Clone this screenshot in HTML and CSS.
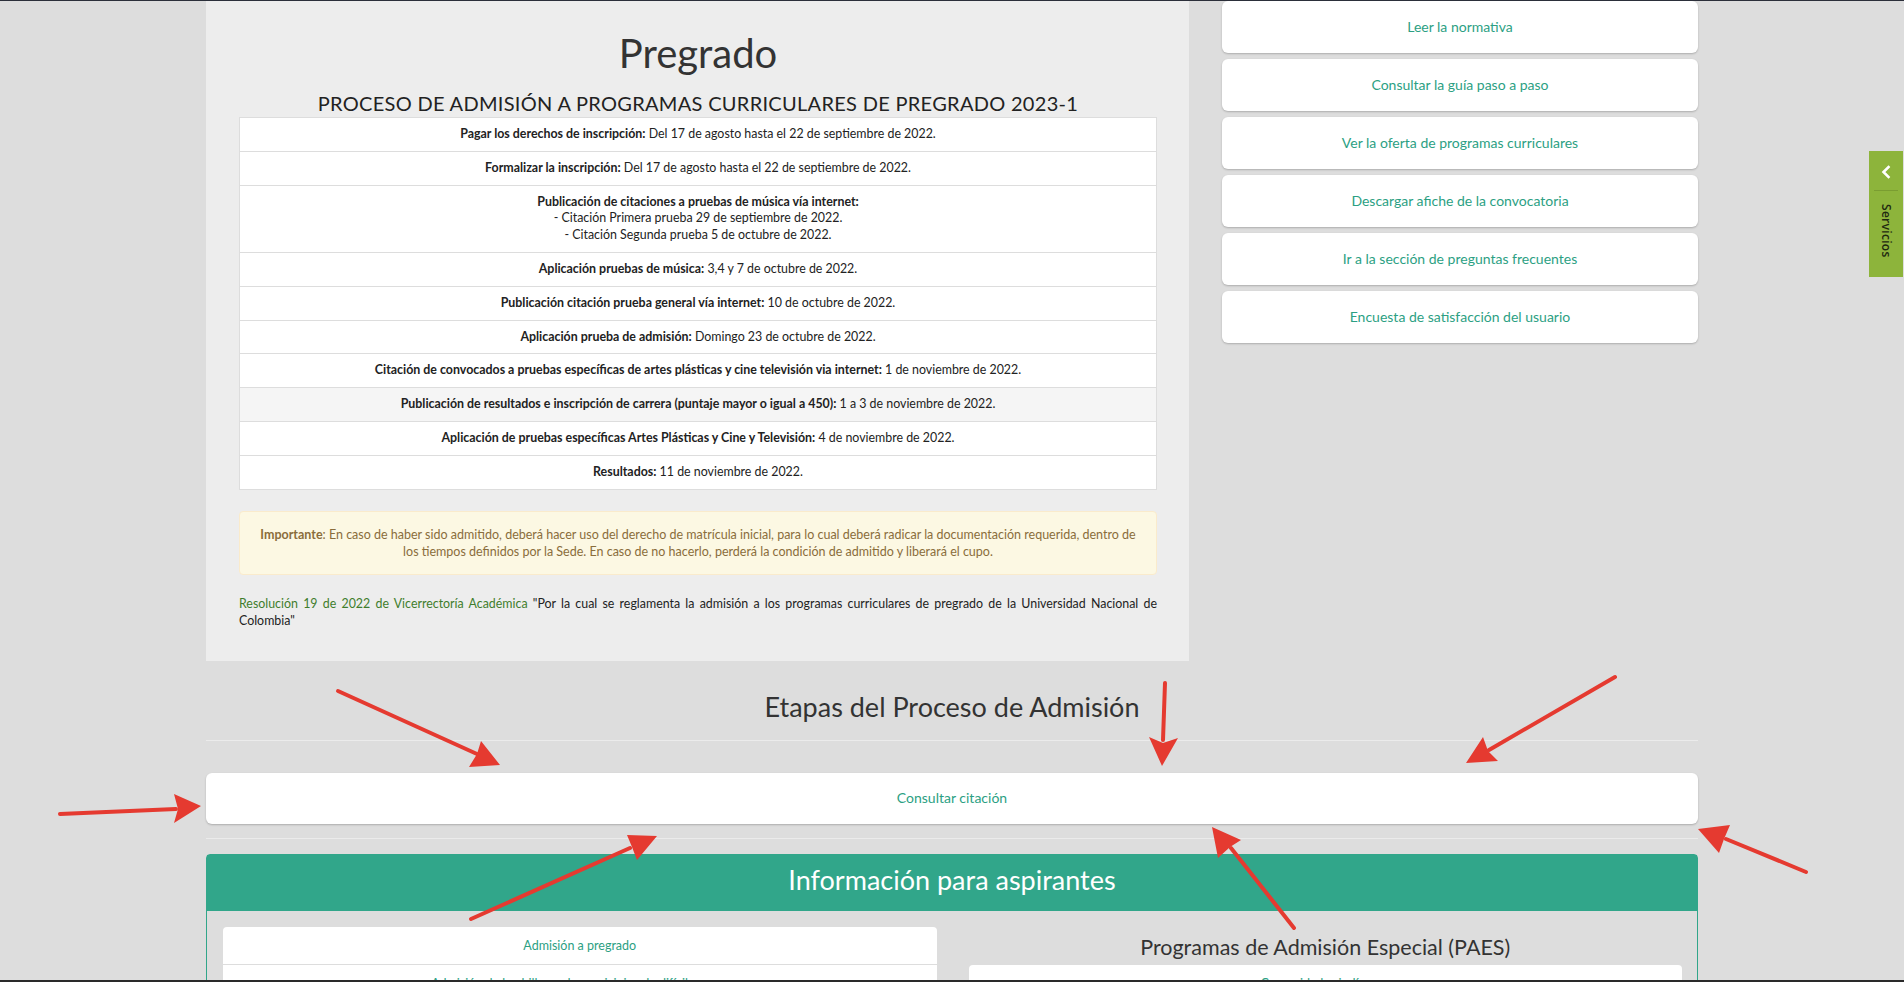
FILE: index.html
```html
<!DOCTYPE html>
<html lang="es">
<head>
<meta charset="utf-8">
<title>Pregrado - Admisiones</title>
<link rel="stylesheet" href="styles.css">
</head>
<body>
<main class="container">
  <div class="top-row">
    <section class="intro-panel">
      <h1 class="intro-title">Pregrado</h1>
      <h2 class="intro-subtitle">PROCESO DE ADMISIÓN A PROGRAMAS CURRICULARES DE PREGRADO 2023-1</h2>
      <table class="dates">
        <tbody>
          <tr><td><b>Pagar los derechos de inscripción:</b> Del 17 de agosto hasta el 22 de septiembre de 2022.</td></tr>
          <tr><td><b>Formalizar la inscripción:</b> Del 17 de agosto hasta el 22 de septiembre de 2022.</td></tr>
          <tr><td><b>Publicación de citaciones a pruebas de música vía internet:</b><br>- Citación Primera prueba 29 de septiembre de 2022.<br>- Citación Segunda prueba 5 de octubre de 2022.</td></tr>
          <tr><td><b>Aplicación pruebas de música:</b> 3,4 y 7 de octubre de 2022.</td></tr>
          <tr><td><b>Publicación citación prueba general vía internet:</b> 10 de octubre de 2022.</td></tr>
          <tr><td><b>Aplicación prueba de admisión:</b> Domingo 23 de octubre de 2022.</td></tr>
          <tr><td><b>Citación de convocados a pruebas específicas de artes plásticas y cine televisión via internet:</b> 1 de noviembre de 2022.</td></tr>
          <tr class="is-hover"><td><b>Publicación de resultados e inscripción de carrera (puntaje mayor o igual a 450):</b> 1 a 3 de noviembre de 2022.</td></tr>
          <tr><td><b>Aplicación de pruebas específicas Artes Plásticas y Cine y Televisión:</b> 4 de noviembre de 2022.</td></tr>
          <tr><td><b>Resultados:</b> 11 de noviembre de 2022.</td></tr>
        </tbody>
      </table>
      <div class="notice"><b>Importante</b>: En caso de haber sido admitido, deberá hacer uso del derecho de matrícula inicial, para lo cual deberá radicar la documentación requerida, dentro de los tiempos definidos por la Sede. En caso de no hacerlo, perderá la condición de admitido y liberará el cupo.</div>
      <p class="resolution"><a href="#">Resolución 19 de 2022 de Vicerrectoría Académica</a> "Por la cual se reglamenta la admisión a los programas curriculares de pregrado de la Universidad Nacional de Colombia"</p>
    </section>
    <nav class="links">
      <a class="card-link" href="#">Leer la normativa</a>
      <a class="card-link" href="#">Consultar la guía paso a paso</a>
      <a class="card-link" href="#">Ver la oferta de programas curriculares</a>
      <a class="card-link" href="#">Descargar afiche de la convocatoria</a>
      <a class="card-link" href="#">Ir a la sección de preguntas frecuentes</a>
      <a class="card-link" href="#">Encuesta de satisfacción del usuario</a>
    </nav>
  </div>

  <h2 class="section-title">Etapas del Proceso de Admisión</h2>
  <hr class="rule rule-top">
  <a class="card-link wide" href="#">Consultar citación</a>
  <hr class="rule rule-bottom">

  <section class="info-panel">
    <h2 class="info-head">Información para aspirantes</h2>
    <div class="info-body">
      <div class="info-col">
        <ul class="list-box">
          <li><a href="#">Admisión a pregrado</a></li>
          <li><a href="#">Admisión de bachilleres de municipios de difícil acceso</a></li>
        </ul>
      </div>
      <div class="info-col">
        <h3 class="info-sub">Programas de Admisión Especial (PAES)</h3>
        <ul class="list-box">
          <li><a href="#">Comunidades indígenas</a></li>
        </ul>
      </div>
    </div>
  </section>
</main>

<aside class="side-tab">
  <div class="side-tab-toggle">
    <svg width="12" height="14" viewBox="0 0 12 14" aria-hidden="true"><polyline points="8.5,2 3.5,7 8.5,12" fill="none" stroke="#fff" stroke-width="2.6" stroke-linecap="square"/></svg>
  </div>
  <div class="side-tab-label">Servicios</div>
</aside>

<div class="frame" aria-hidden="true"></div>

<svg class="annotations" width="1904" height="982" viewBox="0 0 1904 982" aria-hidden="true">
  <g stroke="#e53a30" stroke-width="4" stroke-linecap="round" fill="none">
    <line x1="338" y1="691" x2="477" y2="754"/>
    <line x1="1165" y1="683" x2="1163" y2="740"/>
    <line x1="1615" y1="677" x2="1489" y2="750"/>
    <line x1="60" y1="814" x2="176" y2="809"/>
    <line x1="471" y1="919" x2="630" y2="848"/>
    <line x1="1294" y1="928" x2="1231" y2="848"/>
    <line x1="1806" y1="872" x2="1726" y2="839"/>
  </g>
  <g fill="#e53a30">
    <polygon points="500,765 481,741 477,754 469,767"/>
    <polygon points="1162,766 1149,737 1163,743 1178,738"/>
    <polygon points="1466,763 1483,737 1488,751 1498,761"/>
    <polygon points="201,806 174,794 178,809 174,823"/>
    <polygon points="657,836 627,835 632,847 637,860"/>
    <polygon points="1212,827 1241,840 1230,847 1218,858"/>
    <polygon points="1698,829 1730,825 1724,839 1719,853"/>
  </g>
</svg>
</body>
</html>
```

FILE: styles.css
```css
* { box-sizing: border-box; }

html, body {
  margin: 0;
  padding: 0;
}

body {
  background: #dddddd;
  color: #333333;
  font-family: Lato, "Liberation Sans", Arial, sans-serif;
  font-size: 12.4px;
  height: 982px;
  overflow: hidden;
  position: relative;
}

a { text-decoration: none; }

.container {
  width: 1492px;
  margin: 0 auto;
}

.top-row {
  display: grid;
  grid-template-columns: 983px 476px;
  justify-content: space-between;
  align-items: start;
}

/* ---------- left intro panel ---------- */
.intro-panel {
  background: #ededed;
  padding: 32px 32px 32px 33px;
}

.intro-title {
  margin: 0 0 18px;
  font-size: 40px;
  line-height: 43px;
  font-weight: 400;
  text-align: center;
  color: #333;
}

.intro-subtitle {
  margin: 0 0 3px;
  font-size: 20px;
  line-height: 21px;
  letter-spacing: 0.3px;
  font-weight: 400;
  text-align: center;
  color: #222;
}

.dates {
  width: 100%;
  border-collapse: collapse;
  background: #ffffff;
  border: 1px solid #dddddd;
  margin-bottom: 21px;
}

.dates td {
  padding: 8px;
  line-height: 16.8px;
  border-top: 1px solid #dddddd;
  text-align: center;
  color: #222;
}

.dates b { font-weight: 700; }

.dates .is-hover td { background: #f5f5f5; }

.notice {
  background: #fcf8e3;
  border: 1px solid #faebcc;
  border-radius: 4px;
  color: #8a6d3b;
  padding: 14px 17px;
  font-size: 12.5px;
  line-height: 17px;
  text-align: center;
  margin-bottom: 20px;
}

.resolution {
  margin: 0;
  line-height: 17px;
  text-align: justify;
  color: #222;
}

.resolution a { color: #3f7d2c; }

/* ---------- right links ---------- */
.links {
  display: flex;
  flex-direction: column;
  gap: 6px;
  padding-top: 1px;
}

.card-link {
  display: block;
  background: #ffffff;
  border-radius: 6px;
  box-shadow: 0 1px 2px rgba(0, 0, 0, 0.22);
  padding: 17px 10px;
  line-height: 18px;
  font-size: 14px;
  color: #2c9f83;
  text-align: center;
}

/* ---------- stages ---------- */
.section-title {
  margin: 31px 0 19px;
  font-size: 27px;
  line-height: 29.7px;
  font-weight: 400;
  text-align: center;
  color: #333;
}

.rule {
  border: 0;
  border-top: 1px solid #ebebeb;
  height: 0;
}

.rule-top { margin: 0 0 32px; }
.rule-bottom { margin: 14px 0 15px; }

.card-link.wide { padding: 16px 10px 17px; }

/* ---------- info panel ---------- */
.info-panel {
  border: 1px solid #31a68a;
  border-radius: 4px 4px 0 0;
}

.info-head {
  margin: 0;
  background: #31a68a;
  color: #ffffff;
  font-size: 27px;
  line-height: 29.7px;
  font-weight: 400;
  text-align: center;
  padding: 10px 15px 16px;
}

.info-body {
  display: grid;
  grid-template-columns: 1fr 1fr;
  gap: 32px;
  padding: 16px 15px 16px 16px;
}

.info-sub {
  margin: 9px 0 5px;
  font-size: 21.5px;
  line-height: 23.6px;
  font-weight: 400;
  text-align: center;
  color: #333;
}

.list-box {
  list-style: none;
  margin: 0;
  padding: 0;
  background: #ffffff;
  border-radius: 4px;
}

.list-box li {
  padding: 10px;
  line-height: 17px;
  font-size: 12.5px;
  text-align: center;
}

.list-box li + li { border-top: 1px solid #dddddd; }

.list-box a { color: #2c9f83; }

/* ---------- side tab ---------- */
.side-tab {
  position: absolute;
  top: 151px;
  right: 1px;
  width: 34px;
  height: 126px;
  background: #8db43b;
  display: flex;
  flex-direction: column;
  align-items: center;
}

.side-tab-toggle {
  width: 24px;
  height: 40px;
  display: flex;
  align-items: center;
  justify-content: center;
  border-bottom: 1px solid #7a9d31;
  padding-top: 2px;
}

.side-tab-label {
  writing-mode: vertical-rl;
  font-family: "Open Sans", "Noto Sans", sans-serif;
  font-size: 12px;
  font-weight: 600;
  color: #1f2a10;
  margin-top: 13px;
  letter-spacing: 0.3px;
}

/* ---------- screenshot frame + annotations ---------- */
.frame {
  position: absolute;
  inset: 0;
  border-top: 1px solid #2b2f3a;
  border-bottom: 2px solid #2a2a2a;
  pointer-events: none;
}

.annotations {
  position: absolute;
  top: 0;
  left: 0;
  pointer-events: none;
}
```
